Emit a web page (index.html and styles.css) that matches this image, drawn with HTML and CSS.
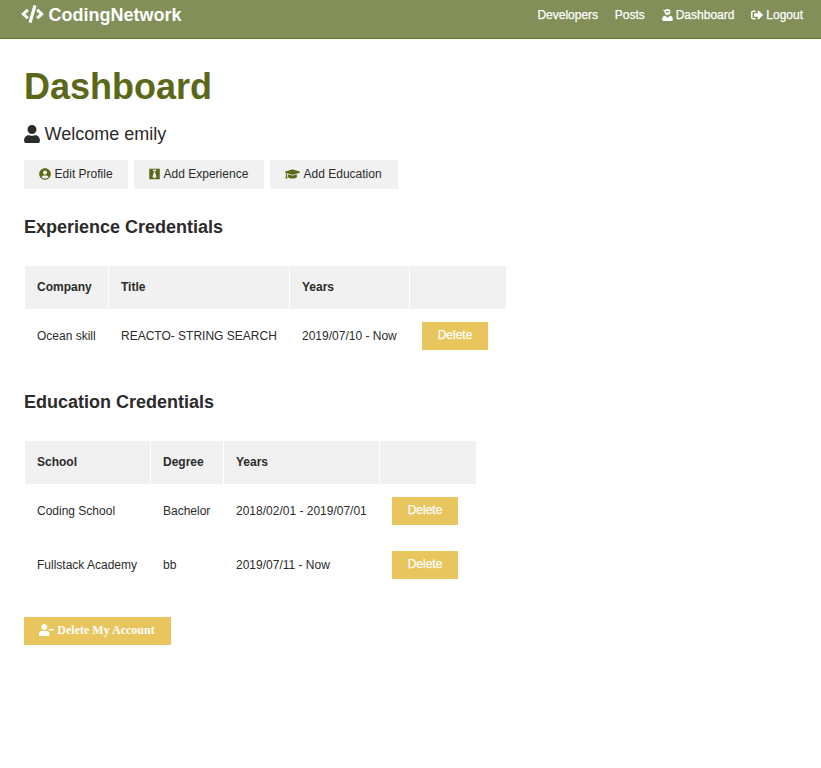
FILE: index.html
```html
<!DOCTYPE html>
<html lang="en">
<head>
<meta charset="utf-8">
<title>CodingNetwork</title>
<link rel="stylesheet" href="styles.css">
</head>
<body>
<nav class="navbar">
  <a class="brand"><svg class="i-code" viewBox="0 0 640 512"><path d="M278.900 511.500l-61-17.700c-6.400-1.800-10-8.500-8.200-14.900L346.200 8.700c1.800-6.400 8.500-10 14.900-8.200l61 17.700c6.400 1.800 10 8.500 8.200 14.900L293.800 503.300c-1.900 6.400-8.500 10.100-14.900 8.200zm-114-112.200l43.500-46.400c4.600-4.900 4.300-12.700-.8-17.200L117 256l90.600-79.700c5.100-4.500 5.500-12.300.8-17.200l-43.500-46.400c-4.500-4.800-12.100-5.100-17-.5L3.800 247.200c-5.100 4.700-5.100 12.800 0 17.500l144.100 135.100c4.900 4.600 12.500 4.400 17-.5zm327.200.6l144.100-135.100c5.100-4.700 5.100-12.800 0-17.500L492.100 112.100c-4.800-4.500-12.400-4.300-17 .5L431.600 159c-4.600 4.900-4.300 12.700.8 17.200L523 256l-90.600 79.700c-5.100 4.500-5.500 12.300-.8 17.200l43.500 46.400c4.500 4.900 12.100 5.100 17 .6z"/></svg><span>CodingNetwork</span></a>
  <ul class="links">
    <li>Developers</li>
    <li>Posts</li>
    <li><svg class="i-11" viewBox="0 0 448 512"><path fill-rule="evenodd" d="M96 64Q112 96 96 112 112 256 224 256T352 128Q352 0 224 0 150 0 115 45L50 20Q45 70 75 105L96 112ZM176 88H272Q304 88 308 138H140Q144 88 176 88ZM325 290Q448 305 448 422V464Q448 512 400 512H48Q0 512 0 464V422Q0 305 123 290L224 372Z"/></svg><span>Dashboard</span></li>
    <li><svg class="i-12" viewBox="0 0 512 512"><path d="M497 273L329 441c-15 15-41 4.500-41-17v-96H152c-13.300 0-24-10.700-24-24v-96c0-13.300 10.700-24 24-24h136V88c0-21.400 25.900-32 41-17l168 168c9.300 9.400 9.300 24.600 0 34zM192 436v-40c0-6.600-5.400-12-12-12H96c-17.700 0-32-14.300-32-32V160c0-17.700 14.300-32 32-32h84c6.600 0 12-5.400 12-12V76c0-6.600-5.400-12-12-12H96c-53 0-96 43-96 96v192c0 53 43 96 96 96h84c6.600 0 12-5.400 12-12z"/></svg><span>Logout</span></li>
  </ul>
</nav>
<main class="container">
  <h1>Dashboard</h1>
  <p class="lead"><svg class="i-user" viewBox="0 0 448 512"><path d="M224 256c70.700 0 128-57.300 128-128S294.700 0 224 0 96 57.300 96 128s57.300 128 128 128zm89.600 32h-16.700c-22.200 10.200-46.900 16-72.900 16s-50.600-5.800-72.900-16h-16.700C60.200 288 0 348.200 0 422.400V464c0 26.500 21.500 48 48 48h352c26.500 0 48-21.500 48-48v-41.600c0-74.200-60.200-134.400-134.400-134.400z"/></svg><span>Welcome emily</span></p>
  <div class="actions">
    <a class="btn edit"><svg class="i-12" viewBox="0 0 496 512"><path d="M248 8C111 8 0 119 0 256s111 248 248 248 248-111 248-248S385 8 248 8zm0 96c48.600 0 88 39.400 88 88s-39.400 88-88 88-88-39.400-88-88 39.400-88 88-88zm0 344c-58.700 0-111.300-26.600-146.500-68.200 18.800-35.400 55.600-59.800 98.500-59.800 2.400 0 4.800.4 7.100 1.100 13 4.200 26.600 6.900 40.900 6.900s28-2.700 40.900-6.900c2.300-.7 4.700-1.100 7.100-1.100 42.900 0 79.700 24.400 98.500 59.800C359.300 421.400 306.700 448 248 448z"/></svg><span>Edit Profile</span></a>
    <a class="btn exp"><svg class="i-11" viewBox="0 0 448 512"><path fill-rule="evenodd" d="M0 32H448V480H0ZM136 70L170 128H278L312 70ZM176 144L196 184 136 370 224 450 312 370 252 184 272 144Z"/></svg><span>Add Experience</span></a>
    <a class="btn edu"><svg class="i-15" viewBox="0 0 640 512"><path d="M622.340 153.200L343.400 67.500c-15.200-4.670-31.600-4.670-46.790 0L17.660 153.200c-23.540 7.230-23.540 38.360 0 45.590l48.630 14.940c-10.670 13.190-17.230 29.280-17.880 46.900C38.780 266.150 32 276.110 32 288c0 10.780 5.680 19.850 13.860 25.650L20.330 428.530C18.110 438.520 25.710 448 35.940 448h56.110c10.240 0 17.840-9.480 15.620-19.470L82.140 313.650C90.320 307.850 96 298.780 96 288c0-11.570-6.470-21.250-15.660-26.870.76-15.020 8.440-28.300 20.690-36.720L296.600 284.500c9.060 2.780 26.440 6.250 46.790 0l278.950-85.700c23.550-7.240 23.550-38.360 0-45.600zM352.790 315.090c-28.530 8.760-52.840 3.920-65.590 0l-145.020-44.550L128 384c0 35.350 85.960 64 192 64s192-28.650 192-64l-14.180-113.470-145.030 44.560z"/></svg><span>Add Education</span></a>
  </div>
  <h2>Experience Credentials</h2>
  <table class="experience">
    <colgroup><col class="c83"><col class="c180"><col class="c119"><col class="c96"></colgroup>
    <thead><tr><th>Company</th><th>Title</th><th>Years</th><th></th></tr></thead>
    <tbody><tr><td>Ocean skill</td><td>REACTO- STRING SEARCH</td><td>2019/07/10 - Now</td><td><button class="danger">Delete</button></td></tr></tbody>
  </table>
  <h2>Education Credentials</h2>
  <table class="education">
    <colgroup><col class="c125"><col class="c72"><col class="c155"><col class="c96"></colgroup>
    <thead><tr><th>School</th><th>Degree</th><th>Years</th><th></th></tr></thead>
    <tbody>
      <tr><td>Coding School</td><td>Bachelor</td><td>2018/02/01 - 2019/07/01</td><td><button class="danger">Delete</button></td></tr>
      <tr><td>Fullstack Academy</td><td>bb</td><td>2019/07/11 - Now</td><td><button class="danger">Delete</button></td></tr>
    </tbody>
  </table>
  <button class="danger account"><svg class="i-15" viewBox="0 0 640 512"><path d="M624 208H432c-8.800 0-16 7.200-16 16v32c0 8.800 7.200 16 16 16h192c8.800 0 16-7.200 16-16v-32c0-8.800-7.200-16-16-16zm-400 48c70.700 0 128-57.300 128-128S294.700 0 224 0 96 57.300 96 128s57.300 128 128 128zm89.600 32h-16.700c-22.200 10.200-46.900 16-72.900 16s-50.600-5.800-72.900-16h-16.700C60.200 288 0 348.200 0 422.400V464c0 26.500 21.500 48 48 48h352c26.500 0 48-21.500 48-48v-41.600c0-74.200-60.200-134.400-134.400-134.400z"/></svg><span>Delete My Account</span></button>
</main>
</body>
</html>
```
FILE: styles.css
```css
* { box-sizing: border-box; margin: 0; padding: 0; }
body { font: 12px/19px "Liberation Sans", Arial, sans-serif; color: #2b2b2b; background: #fff; }
svg { fill: currentColor; flex: none; display: block; }
.navbar { height: 39px; padding: 0 18px 9px 21px; display: flex; justify-content: space-between; align-items: center; background: #828f58; border-bottom: 1px solid #6b7429; color: #fff; }
.brand { display: flex; align-items: center; gap: 4.5px; font-size: 18px; line-height: 28px; font-weight: bold; }
.brand svg { margin-bottom: 1px; }
.lead svg { margin-bottom: 1px; }
.links { display: flex; list-style: none; gap: 16.7px; padding-top: 2px; -webkit-text-stroke: 0.25px #fff; }
.links li { display: flex; align-items: center; gap: 3.2px; }
.links svg { margin-bottom: 1px; }
.i-code { width: 23px; height: 18px; }
.i-11 { width: 11px; height: 12px; }
.i-12 { width: 12px; height: 12px; }
.i-15 { width: 15px; height: 12px; }
.i-user { width: 16px; height: 18px; }
.container { padding: 26px 24px; }
h1 { font-size: 36px; line-height: 43px; color: #5c6819; margin-bottom: 12px; }
.lead { display: flex; align-items: center; gap: 4.5px; font-size: 18px; line-height: 28px; margin-bottom: 12px; }
.actions { display: flex; gap: 6px; }
.btn { height: 29px; padding: 0 15px 1px 15.4px; display: flex; align-items: center; gap: 3.2px; background: #f1f1f1; white-space: nowrap; }
.btn svg { color: #5c6819; margin-bottom: 1px; }
.edit { width: 104px; }
.exp { width: 130px; }
.edu { width: 128px; }
h2 { font-size: 18px; line-height: 28px; margin: 24px 0; }
table { table-layout: fixed; border-collapse: separate; border-spacing: 1px; }
.experience { width: 483px; margin-bottom: 23px; }
.education { width: 453px; margin-bottom: 24px; }
.c72 { width: 72px; }
.c83 { width: 83px; }
.c96 { width: 96px; }
.c119 { width: 119px; }
.c125 { width: 125px; }
.c155 { width: 155px; }
.c180 { width: 180px; }
th, td { padding: 0 12px; text-align: left; white-space: nowrap; vertical-align: middle; }
th { height: 43px; background: #f1f1f1; }
td { height: 53px; }
td:last-child { padding-bottom: 1px; }
.danger { display: flex; align-items: center; justify-content: center; width: 66px; height: 28px; padding-bottom: 1px; border: 0; background: #e8c55d; color: #fff; font: 12px/19px "Liberation Sans", Arial, sans-serif; -webkit-text-stroke: 0.25px #fff; }
.account { width: 147px; padding-bottom: 2px; padding-right: 1px; gap: 3px; font: bold 12px/19px "Liberation Serif", "Times New Roman", serif; -webkit-text-stroke: 0; }
.account svg { margin-bottom: 1px; }
```
